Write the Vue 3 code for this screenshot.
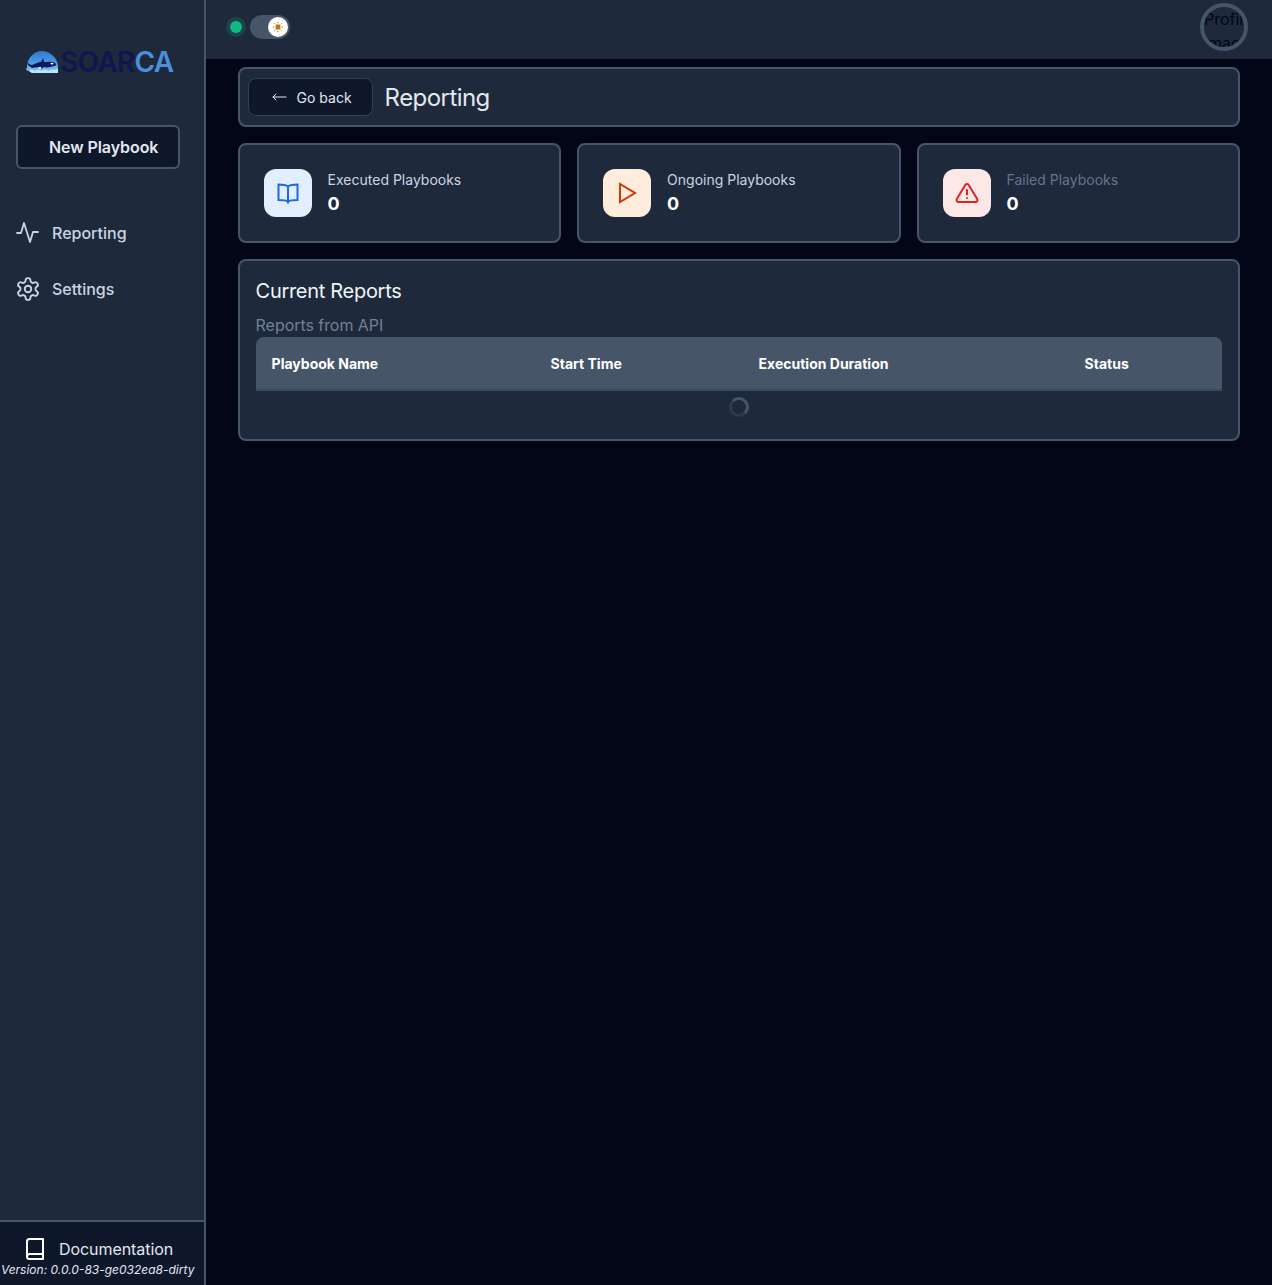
<template>
	<div class="layout">
		<aside class="sidebar">
			<div class="logo">
				<svg class="orca" width="34" height="24" viewBox="0 0 34 24">
					<defs>
						<linearGradient id="sky" x1="0" y1="0" x2="0" y2="1">
							<stop offset="0" stop-color="#2f78d0" />
							<stop offset="0.55" stop-color="#4a9be6" />
							<stop offset="1" stop-color="#8fd0f2" />
						</linearGradient>
					</defs>
					<path d="M2 17C2 8 9 1 17 1s16 7 16 16v6H7l-3-2-3-1z" fill="url(#sky)" />
					<path d="M2 13c2 0 3 2 5 2 3-1 6-3 9-3l2-4 1 4c4 0 8-1 11 1 2 1 1 3-1 3-4 1-7 2-10 1l-3 2-2-2c-3 0-5 1-7 1-2-1-4-3-5-5z" fill="#101a5c" />
					<ellipse cx="27" cy="13.600" rx="1.500" ry="0.900" fill="#fff" />
					<ellipse cx="15" cy="18" rx="1.300" ry="1" fill="#fff" />
					<path d="M4 21c2-2 4-1 6 0 2-2 4-2 6 0 2-1 5-2 7 0 2-1 5-1 10-2v4H7z" fill="#bfe6f8" />
				</svg>
				<span class="logo-text"><span class="soar">SOAR</span><span class="ca">CA</span></span>
			</div>

			<button class="new-btn">New Playbook</button>

			<nav class="nav">
				<a class="nav-item">
					<svg width="24" height="24" viewBox="0 0 24 24" fill="none" stroke="currentColor" stroke-width="1.800" stroke-linecap="round" stroke-linejoin="round">
						<path d="M1 12h4l3-10 6 19 3-10h5" />
					</svg>
					<span>Reporting</span>
				</a>
				<a class="nav-item">
					<svg width="24" height="24" viewBox="1.500 1 21 22" fill="none" stroke="currentColor" stroke-width="1.700" stroke-linecap="round" stroke-linejoin="round">
						<path d="M12.220 2h-.44a2 2 0 0 0-2 2v.18a2 2 0 0 1-1 1.730l-.43.25a2 2 0 0 1-2 0l-.15-.08a2 2 0 0 0-2.730.73l-.22.38a2 2 0 0 0 .73 2.730l.15.1a2 2 0 0 1 1 1.720v.51a2 2 0 0 1-1 1.740l-.15.09a2 2 0 0 0-.73 2.730l.22.38a2 2 0 0 0 2.730.73l.15-.08a2 2 0 0 1 2 0l.43.25a2 2 0 0 1 1 1.730V20a2 2 0 0 0 2 2h.44a2 2 0 0 0 2-2v-.18a2 2 0 0 1 1-1.730l.43-.25a2 2 0 0 1 2 0l.15.08a2 2 0 0 0 2.730-.73l.22-.39a2 2 0 0 0-.73-2.730l-.15-.08a2 2 0 0 1-1-1.740v-.5a2 2 0 0 1 1-1.740l.15-.09a2 2 0 0 0 .73-2.730l-.22-.38a2 2 0 0 0-2.730-.73l-.15.08a2 2 0 0 1-2 0l-.43-.25a2 2 0 0 1-1-1.730V4a2 2 0 0 0-2-2z" />
						<circle cx="12" cy="12" r="3" />
					</svg>
					<span>Settings</span>
				</a>
			</nav>

			<div class="docs">
				<div class="docs-link">
					<svg width="24" height="24" viewBox="0 0 24 24" fill="none" stroke="#fff" stroke-width="2" stroke-linecap="round" stroke-linejoin="round">
						<path d="M4 19.500A2.500 2.500 0 0 1 6.500 17H20" />
						<path d="M6.500 2H20v20H6.500A2.500 2.500 0 0 1 4 19.500v-15A2.500 2.500 0 0 1 6.500 2z" />
					</svg>
					<span>Documentation</span>
				</div>
				<p class="version">Version: 0.0.0-83-ge032ea8-dirty</p>
			</div>
		</aside>

		<div class="content">
			<header class="topbar">
				<div class="topbar-left">
					<span class="status-dot"></span>
					<span class="toggle">
						<span class="knob">
							<svg width="12" height="12" viewBox="0 0 12 12" fill="none" stroke="#c2740e" stroke-width="1">
								<rect x="3.600" y="3.600" width="4.800" height="4.800" rx="1.200" fill="#c2740e" stroke="none" />
								<path d="M6 .8v1.400M6 9.800v1.400M.8 6h1.400M9.800 6h1.400M2.300 2.300l.9.9M8.800 8.800l.9.9M2.300 9.700l.9-.9M8.800 3.200l.9-.9" />
							</svg>
						</span>
					</span>
				</div>
				<div class="avatar"><span>Profile image</span></div>
			</header>

			<main class="main">
				<section class="panel title-bar">
					<button class="back-btn">
						<svg width="16" height="16" viewBox="0 0 16 16" fill="none" stroke="currentColor" stroke-width="1" stroke-linecap="round" stroke-linejoin="round">
							<path d="M15 8H2M5 5 2 8l3 3" />
						</svg>
						<span>Go back</span>
					</button>
					<h1>Reporting</h1>
				</section>

				<section class="stats">
					<div class="panel stat" v-for="stat in stats" :key="stat.label">
						<div class="stat-icon" :class="stat.kind">
							<svg v-if="stat.kind === 'blue'" width="24" height="24" viewBox="0 0 24 24" fill="none" stroke="#1c64f2" stroke-width="2" stroke-linejoin="miter">
								<path d="M12 5.500C10 4 6 3.500 2.500 3.500V19c3.500 0 7.500 0 9.500 1.500 2-1.500 6-1.500 9.500-1.500V3.500C18 3.500 14 4 12 5.500zM12 5.500v17" />
							</svg>
							<svg v-else-if="stat.kind === 'orange'" width="24" height="24" viewBox="0 0 24 24" fill="none" stroke="#d03801" stroke-width="2" stroke-linejoin="miter">
								<path d="M5 3v18l15-9z" />
							</svg>
							<svg v-else width="24" height="24" viewBox="0 0 24 24" fill="none" stroke="#e02424" stroke-width="2" stroke-linecap="round" stroke-linejoin="round">
								<path d="M10.300 3.900 1.800 18a2 2 0 0 0 1.700 3h17a2 2 0 0 0 1.700-3L13.700 3.900a2 2 0 0 0-3.400 0z" />
								<path d="M12 9v4.500M12 17h.01" />
							</svg>
						</div>
						<div class="stat-text">
							<span class="stat-label" :class="{ dim: stat.kind === 'red' }">{{ stat.label }}</span>
							<span class="stat-value">{{ stat.value }}</span>
						</div>
					</div>
				</section>

				<section class="panel reports">
					<h2>Current Reports</h2>
					<p class="reports-sub">Reports from API</p>
					<div class="table-head">
						<span>Playbook Name</span>
						<span>Start Time</span>
						<span>Execution Duration</span>
						<span>Status</span>
					</div>
					<div class="loading"><span class="spinner"></span></div>
				</section>
			</main>
		</div>
	</div>
</template>

<script setup>
const stats = [
	{ label: 'Executed Playbooks', value: 0, kind: 'blue' },
	{ label: 'Ongoing Playbooks', value: 0, kind: 'orange' },
	{ label: 'Failed Playbooks', value: 0, kind: 'red' }
]
</script>

<style>
body {
	background-color: #020617;
}
</style>

<style scoped>
* {
	box-sizing: border-box;
	margin: 0;
	padding: 0;
}

.layout {
	display: flex;
	height: 1285px;
	overflow: hidden;
	background-color: #020617;
	color: #fff;
	font-family: Inter, 'Liberation Sans', sans-serif;
}

.sidebar {
	display: flex;
	flex-direction: column;
	flex: 0 0 205.6px;
	background-color: #1e293b;
	border-right: 2px solid #475569;
}

.logo {
	display: flex;
	align-items: center;
	height: 125px;
	padding: 0 0 2px 25px;
}

.orca {
	flex: none;
}

.logo-text {
	font-size: 28px;
	font-weight: 600;
	letter-spacing: -0.7px;
	margin-left: 1px;
}

.soar {
	color: #0f174f;
}

.ca {
	color: #4a90d9;
}

.new-btn {
	align-self: flex-start;
	width: 164px;
	height: 44px;
	margin-left: 16px;
	padding-left: 31px;
	text-align: left;
	background-color: #0f172a;
	border: 2px solid #475569;
	border-radius: 6px;
	color: #e2e8f0;
	font: 600 16px Inter, 'Liberation Sans', sans-serif;
	letter-spacing: -0.08px;
}

.nav {
	display: flex;
	flex-direction: column;
	gap: 8px;
	margin-top: 40px;
	padding-left: 16px;
}

.nav-item {
	display: flex;
	align-items: center;
	gap: 12px;
	height: 48px;
	color: #cbd5e1;
	font-size: 16px;
	font-weight: 500;
}

.docs {
	margin-top: auto;
	height: 65px;
	background-color: #0f172a;
	border-top: 2px solid #475569;
}

.docs-link {
	display: flex;
	align-items: center;
	gap: 12px;
	padding: 15px 0 0 23px;
	height: 38px;
	color: #e2e8f0;
	font-size: 16px;
	letter-spacing: -0.06px;
}

.version {
	margin-top: 2px;
	padding-left: 1px;
	color: #e2e8f0;
	font-size: 12px;
	font-style: italic;
	white-space: nowrap;
}

.content {
	flex: 1;
	min-width: 0;
	display: flex;
	flex-direction: column;
}

.topbar {
	display: flex;
	align-items: center;
	justify-content: space-between;
	height: 59px;
	padding: 0 24px 5px 20px;
	background-color: #1e293b;
}

.topbar-left {
	display: flex;
	align-items: center;
	gap: 4px;
}

.status-dot {
	width: 12px;
	height: 12px;
	margin: 4px;
	border-radius: 50%;
	background-color: #10b981;
	box-shadow: 0 0 0 4px rgba(16, 185, 129, 0.2);
}

.toggle {
	display: flex;
	align-items: center;
	justify-content: flex-end;
	width: 40px;
	height: 24px;
	padding: 2px;
	border-radius: 12px;
	background-color: #475569;
}

.knob {
	display: flex;
	align-items: center;
	justify-content: center;
	width: 20px;
	height: 20px;
	border-radius: 50%;
	background-color: #fff;
}

.avatar {
	width: 48px;
	height: 48px;
	overflow: hidden;
	border: 4px solid #475569;
	border-radius: 50%;
	color: #020617;
	font-size: 16px;
	line-height: 24px;
	word-spacing: 40px;
}

.main {
	display: flex;
	flex-direction: column;
	gap: 16px;
	padding: 8px 32px 0;
}

.panel {
	background-color: #1e293b;
	border: 2px solid #475569;
	border-radius: 8px;
}

.title-bar {
	display: flex;
	align-items: center;
	gap: 12px;
	height: 60px;
	padding-left: 8px;
}

.back-btn {
	display: flex;
	align-items: center;
	gap: 10px;
	width: 125px;
	height: 38px;
	padding-left: 22px;
	background-color: #0f172a;
	border: 1px solid #334155;
	border-radius: 8px;
	color: #e2e8f0;
	font: 400 14px Inter, 'Liberation Sans', sans-serif;
}

h1 {
	font-size: 24px;
	font-weight: 400;
	letter-spacing: -0.55px;
	color: #e2e8f0;
}

.stats {
	display: grid;
	grid-template-columns: repeat(3, 1fr);
	gap: 16px;
}

.stat {
	display: flex;
	align-items: center;
	gap: 16px;
	height: 100px;
	padding-left: 24px;
}

.stat-icon {
	display: flex;
	align-items: center;
	justify-content: center;
	width: 48px;
	height: 48px;
	border-radius: 12px;
}

.stat-icon.blue {
	background-color: #e1effe;
}

.stat-icon.orange {
	background-color: #feecdc;
}

.stat-icon.red {
	background-color: #fde8e8;
}

.stat-text {
	display: flex;
	flex-direction: column;
	gap: 2px;
}

.stat-label {
	color: #cbd5e1;
	font-size: 14px;
	line-height: 20px;
}

.stat-label.dim {
	color: #64748b;
}

.stat-value {
	color: #fff;
	font-size: 18px;
	font-weight: 700;
	line-height: 24px;
}

.reports {
	height: 182px;
	padding: 16px;
}

h2 {
	font-size: 20px;
	font-weight: 400;
	letter-spacing: -0.3px;
	line-height: 28px;
	color: #f1f5f9;
}

.reports-sub {
	margin-top: 9px;
	margin-bottom: 1px;
	color: #718096;
	font-size: 16px;
	letter-spacing: -0.05px;
	line-height: 22px;
}

.table-head {
	display: grid;
	grid-template-columns: 279px 208px 326px 1fr;
	height: 54px;
	padding-left: 16px;
	background-color: #475569;
	border-bottom: 2px solid #3d4b5f;
	border-radius: 8px 8px 0 0;
	color: #fff;
	font-size: 14px;
	font-weight: 700;
	line-height: 54px;
}

.loading {
	display: flex;
	justify-content: center;
	padding-top: 6px;
}

.spinner {
	width: 20px;
	height: 20px;
	border: 3px solid #2c3a4e;
	border-top-color: #475569;
	border-right-color: #475569;
	border-radius: 50%;
}
</style>
